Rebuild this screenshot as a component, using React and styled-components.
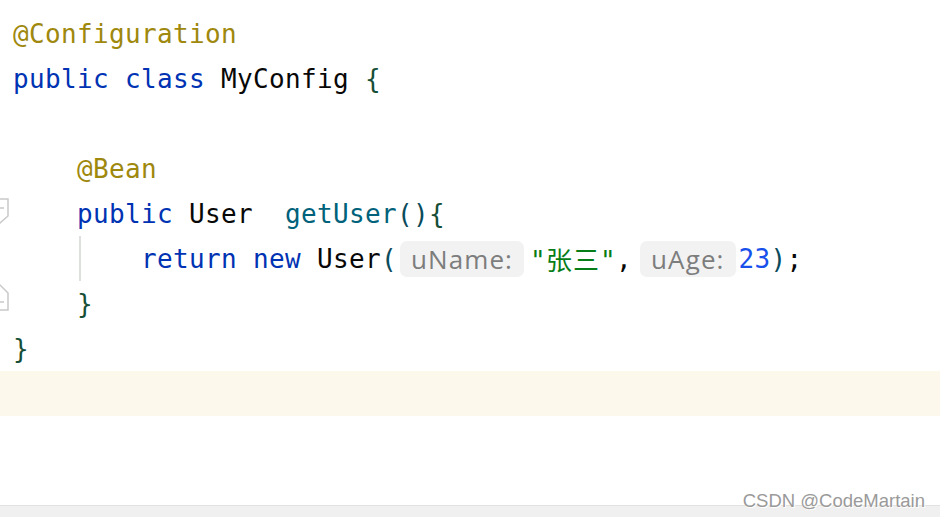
import React from "react";
import styled, { createGlobalStyle } from "styled-components";

const GlobalStyle = createGlobalStyle`
  html, body {
    margin: 0;
    padding: 0;
    background: #ffffff;
  }
  #root {
    height: 100vh;
  }
`;

const colors = {
  annotation: "#9e880d",
  keyword: "#0033b3",
  plain: "#080808",
  method: "#00627a",
  string: "#067d17",
  number: "#1750eb",
  paren: "#0a4b5c",
  brace: "#164e36",
};

const Page = styled.div`
  position: relative;
  display: flex;
  flex-direction: column;
  height: 100vh;
  overflow: hidden;
`;

const Editor = styled.div`
  flex: 1;
  padding-top: 11px;
  font-family: "DejaVu Sans Mono", "Noto Sans CJK SC", monospace;
  font-size: 26px;
  letter-spacing: 0.345px;
  color: ${colors.plain};
`;

const Row = styled.div`
  display: flex;
  align-items: center;
  height: 45px;
  white-space: pre;
  background: ${(p) => (p.$current ? "#fcf9ec" : "transparent")};
`;

const Gutter = styled.div`
  flex: 0 0 13px;
  height: 45px;
  svg {
    display: block;
  }
`;

const Code = styled.div`
  display: flex;
  align-items: center;
  height: 45px;
`;

const Indent = styled.span`
  display: inline-block;
  width: 64px;
  height: 45px;
  box-sizing: border-box;
  border-left: ${(p) => (p.$guide ? "2px solid #dde1dc" : "none")};
  margin-left: ${(p) => (p.$guide ? "2px" : "0")};
  margin-right: ${(p) => (p.$guide ? "-2px" : "0")};
`;

const Tok = styled.span`
  color: ${(p) => colors[p.$k] || colors.plain};
`;

const Cjk = styled.span`
  font-family: "Noto Sans CJK SC", sans-serif;
  letter-spacing: 1px;
`;

const Hint = styled.span`
  display: inline-flex;
  align-items: center;
  height: 36px;
  padding: 0 11px;
  margin: 0 ${(p) => p.$right}px 0 ${(p) => p.$left}px;
  border-radius: 7px;
  background: #f2f2f2;
  color: #7d7d7d;
  font-family: "Open Sans", "Noto Sans", sans-serif;
  font-size: 26px;
  letter-spacing: 1.1px;
`;

const BottomBar = styled.div`
  flex: 0 0 11px;
  border-top: 1px solid #e2e2e2;
  background: #f0f0f0;
`;

const Watermark = styled.div`
  position: absolute;
  right: 15px;
  bottom: 5px;
  font-family: "Liberation Sans", Arial, sans-serif;
  font-size: 18.5px;
  color: #9a9a9a;
  text-shadow: 0 0 1px #ffffff, 1px 1px 0 #ffffff;
`;

const FoldStart = () => (
  <svg width="12" height="45" viewBox="0 0 12 45">
    <path
      d="M-8 8 H8 V25 L0 32 L-8 25 Z M-4 17 H4"
      fill="none"
      stroke="#c9c9c9"
      strokeWidth="1.5"
    />
  </svg>
);

const FoldEnd = () => (
  <svg width="12" height="45" viewBox="0 0 12 45">
    <path
      d="M0 4 L8 12 V29 H-8 V12 Z M-4 21 H4"
      fill="none"
      stroke="#c9c9c9"
      strokeWidth="1.5"
    />
  </svg>
);

const Line = ({ fold, current, children }) => (
  <Row $current={current}>
    <Gutter>{fold === "start" ? <FoldStart /> : fold === "end" ? <FoldEnd /> : null}</Gutter>
    <Code>{children}</Code>
  </Row>
);

const App = () => {
  return (
    <Page>
      <GlobalStyle />
      <Editor>
        <Line>
          <Tok $k="annotation">@Configuration</Tok>
        </Line>
        <Line>
          <Tok $k="keyword">public class </Tok>
          <Tok>MyConfig </Tok>
          <Tok $k="brace">{"{"}</Tok>
        </Line>
        <Line />
        <Line>
          <Indent />
          <Tok $k="annotation">@Bean</Tok>
        </Line>
        <Line fold="start">
          <Indent />
          <Tok $k="keyword">public </Tok>
          <Tok>User  </Tok>
          <Tok $k="method">getUser</Tok>
          <Tok $k="paren">()</Tok>
          <Tok $k="brace">{"{"}</Tok>
        </Line>
        <Line>
          <Indent />
          <Indent $guide />
          <Tok $k="keyword">return new </Tok>
          <Tok>User</Tok>
          <Tok $k="paren">(</Tok>
          <Hint $left={3} $right={6}>uName:</Hint>
          <Tok $k="string">
            "<Cjk>张三</Cjk>"
          </Tok>
          <Tok>,</Tok>
          <Hint $left={8} $right={3}>uAge:</Hint>
          <Tok $k="number">23</Tok>
          <Tok $k="paren">)</Tok>
          <Tok>;</Tok>
        </Line>
        <Line fold="end">
          <Indent />
          <Tok $k="brace">{"}"}</Tok>
        </Line>
        <Line>
          <Tok $k="brace">{"}"}</Tok>
        </Line>
        <Line current />
      </Editor>
      <BottomBar />
      <Watermark>CSDN @CodeMartain</Watermark>
    </Page>
  );
};

export default App;
